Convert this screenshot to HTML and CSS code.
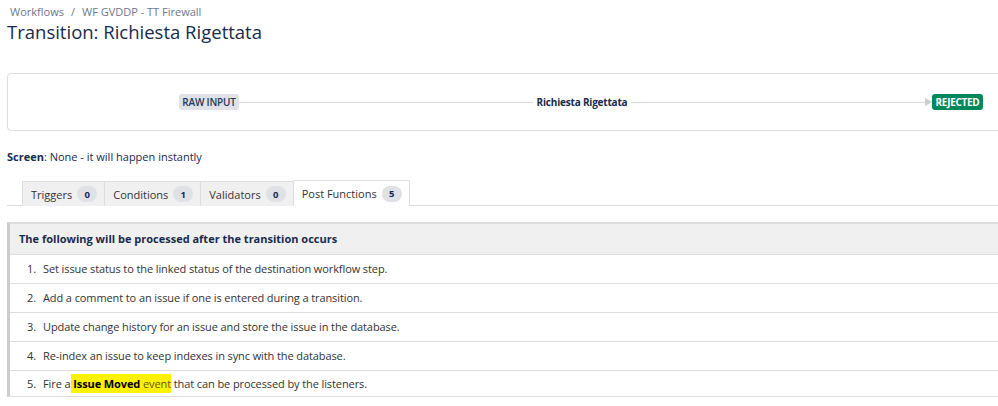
FILE: index.html
```html
<!DOCTYPE html>
<html>
<head>
<meta charset="utf-8">
<link rel="stylesheet" href="styles.css">
</head>
<body>
<div class="page">
  <div class="breadcrumbs"><span>Workflows</span><span class="sep">/</span><span>WF GVDDP - TT Firewall</span></div>
  <h1 class="title">Transition: Richiesta Rigettata</h1>

  <div class="diagram">
    <span class="lozenge lozenge-grey">RAW INPUT</span>
    <span class="line"></span>
    <span class="trans-name">Richiesta Rigettata</span>
    <span class="line"></span>
    <span class="arrow"></span>
    <span class="lozenge lozenge-green">REJECTED</span>
  </div>

  <p class="screen"><strong>Screen</strong>: None - it will happen instantly</p>

  <div class="tabs">
    <div class="tab">Triggers <span class="badge">0</span></div>
    <div class="tab">Conditions <span class="badge">1</span></div>
    <div class="tab">Validators <span class="badge">0</span></div>
    <div class="tab active">Post Functions <span class="badge">5</span></div>
  </div>

  <div class="pf">
    <div class="pf-head">The following will be processed after the transition occurs</div>
    <div class="pf-row"><span class="num">1.</span><span>Set issue status to the linked status of the destination workflow step.</span></div>
    <div class="pf-row"><span class="num">2.</span><span>Add a comment to an issue if one is entered during a transition.</span></div>
    <div class="pf-row"><span class="num">3.</span><span>Update change history for an issue and store the issue in the database.</span></div>
    <div class="pf-row"><span class="num">4.</span><span>Re-index an issue to keep indexes in sync with the database.</span></div>
    <div class="pf-row last"><span class="num">5.</span><span>Fire a<span class="hl"> <strong>Issue Moved</strong> event</span> that can be processed by the listeners.</span></div>
  </div>
</div>
</body>
</html>
```

FILE: styles.css
```css
html, body {
  margin: 0;
  padding: 0;
  overflow: hidden;
  background: #fff;
}
body {
  font-family: "Open Sans", "Noto Sans", "Liberation Sans", sans-serif;
  color: #172b4d;
  font-size: 11px;
}
.page {
  width: 1010px;
  padding: 4px 0 0 7px;
}
.breadcrumbs {
  color: #6b778c;
  font-size: 11px;
  line-height: 16px;
  padding-left: 3px;
}
.breadcrumbs .sep {
  margin: 0 7px;
}
.title {
  margin: 0;
  font-size: 18.5px;
  font-weight: 400;
  line-height: 24px;
  color: #172b4d;
}
.diagram {
  margin-top: 29px;
  height: 56px;
  border: 1px solid #ddd;
  border-radius: 4px;
  display: flex;
  align-items: center;
  padding-left: 171px;
  padding-right: 33px;
}
.lozenge {
  font-size: 10px;
  line-height: 16px;
  border-radius: 3px;
  text-transform: uppercase;
  white-space: nowrap;
  text-align: center;
  flex: none;
}
.lozenge-grey {
  background: #dfe1e6;
  color: #253858;
  font-weight: 600;
  width: 60px;
  letter-spacing: -0.2px;
}
.lozenge-green {
  background: #00875a;
  color: #fff;
  font-weight: 700;
  width: 51px;
  letter-spacing: -0.3px;
}
.line {
  height: 1px;
  background: #dadada;
  flex: 1;
}
.trans-name {
  font-size: 10px;
  font-weight: 700;
  color: #172b4d;
  padding: 0 4px;
  white-space: nowrap;
  letter-spacing: -0.2px;
  flex: none;
}
.arrow {
  width: 0;
  height: 0;
  border-top: 4px solid transparent;
  border-bottom: 4px solid transparent;
  border-left: 7px solid #ccc;
  flex: none;
}
.screen {
  margin: 18px 0 0 0;
  line-height: 16px;
  color: #172b4d;
}
.tabs {
  margin-top: 15px;
  display: flex;
  padding-left: 15px;
  border-bottom: 1px solid #ddd;
  height: 25px;
}
.tab {
  display: flex;
  align-items: center;
  gap: 5px;
  padding: 0 7px 0 8px;
  background: #f0f0f0;
  border: 1px solid #ddd;
  border-bottom: none;
  border-right: none;
  color: #333;
  font-size: 11px;
  height: 24px;
  margin-top: 1px;
  white-space: nowrap;
}
.tab.active {
  background: #fff;
  border-right: 1px solid #ddd;
  border-radius: 2px 2px 0 0;
  height: 25px;
  margin-bottom: -1px;
  margin-top: 0;
}
.badge {
  display: inline-flex;
  align-items: center;
  justify-content: center;
  width: 20px;
  height: 16px;
  border-radius: 8px;
  background: #dfe1e6;
  color: #172b4d;
  font-size: 9.5px;
  font-weight: 700;
}
.pf {
  margin-top: 16px;
  border-top: 2px solid #ddd;
  border-left: 3px solid #ccc;
  border-bottom: 1px solid #ddd;
}
.pf-head {
  background: #f0f0f0;
  font-weight: 700;
  line-height: 30px;
  padding-left: 9px;
  border-bottom: 1px solid #ddd;
  color: #172b4d;
}
.pf-row {
  display: flex;
  line-height: 28px;
  border-bottom: 1px solid #ddd;
  color: #333;
  white-space: nowrap;
  letter-spacing: -0.1px;
}
.pf-row.last {
  border-bottom: none;
  line-height: 25px;
}
.num {
  width: 26px;
  text-align: right;
  padding-right: 7px;
  flex: none;
}
.hl {
  background: #fff200;
  color: #5c5c00;
  padding: 2px 0;
}
.hl strong {
  color: #000;
}
```
